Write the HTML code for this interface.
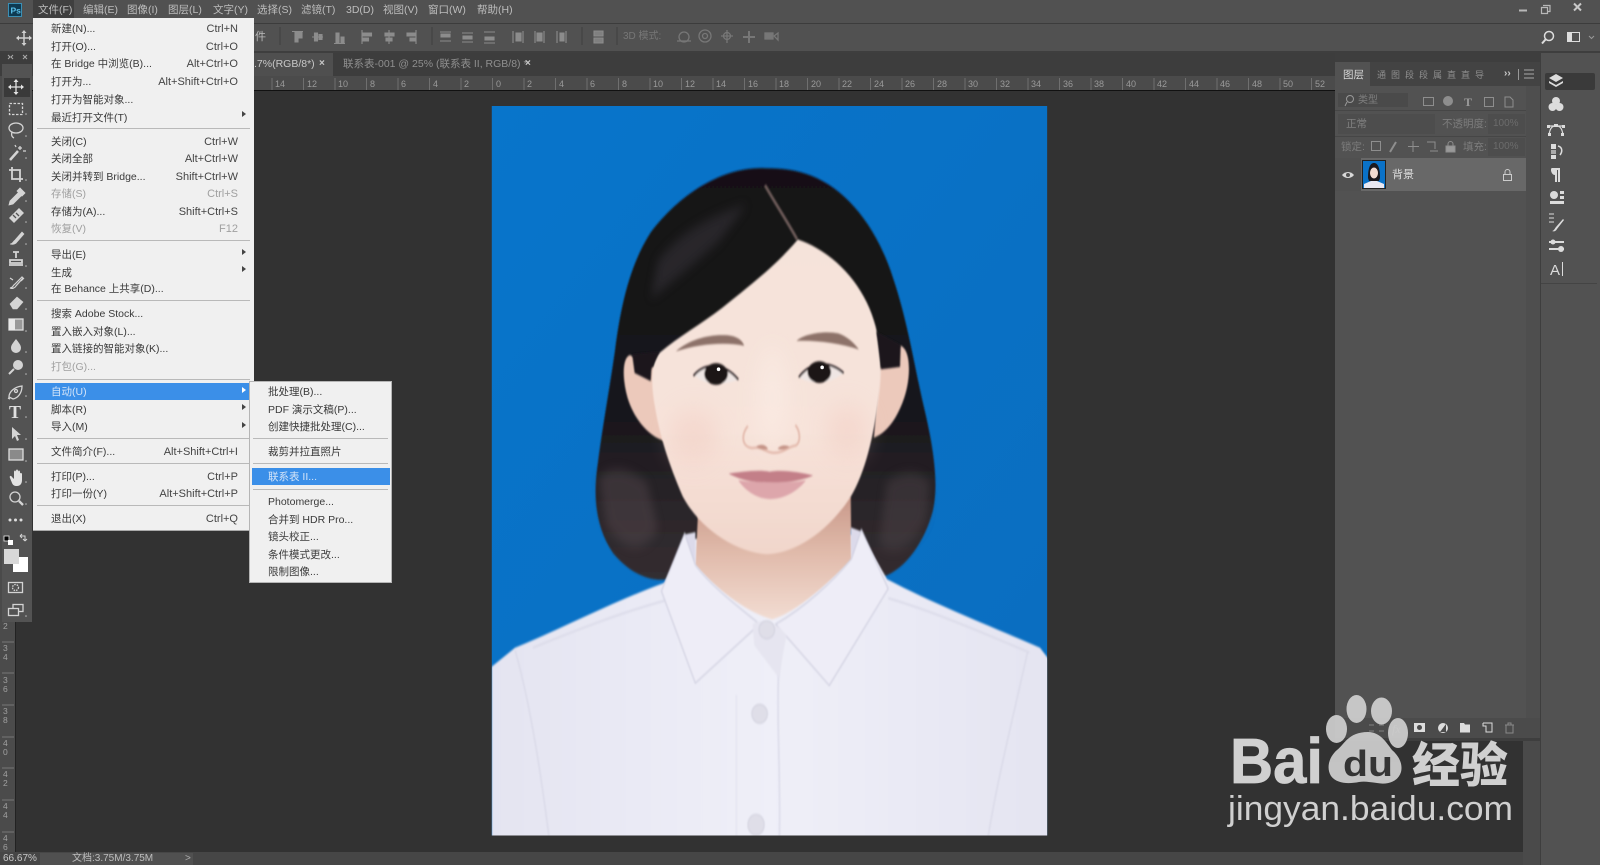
<!DOCTYPE html>
<html lang="zh"><head><meta charset="utf-8"><title>Photoshop</title>
<style>
html,body{margin:0;padding:0;background:#323232;width:1600px;height:865px;overflow:hidden}
#w{position:relative;width:1600px;height:865px;overflow:hidden;font:11px "Liberation Sans","Noto Sans CJK SC",sans-serif;filter:blur(.35px)}
.a{position:absolute}
.t{position:absolute;white-space:nowrap;line-height:14px}
.m{color:#bdbdbd;font-size:10.5px;top:3px}
.r{position:absolute;left:18px;white-space:nowrap;line-height:14px;color:#3a3a3a;font-size:10.5px}
.k{position:absolute;right:16px;white-space:nowrap;line-height:14px;color:#444;font-size:11px}
.d{color:#a0a0a0}
.s{position:absolute;left:4px;right:4px;height:1px;background:#b9b9b9}
.ar{position:absolute;left:209px;width:0;height:0;border-left:4px solid #444;border-top:3.5px solid transparent;border-bottom:3.5px solid transparent}
.u{position:absolute;left:18px;white-space:nowrap;line-height:14px;color:#3a3a3a;font-size:10.5px}
svg{position:absolute;overflow:visible}
</style></head><body><div id="w">

<!-- app chrome -->
<div class="a" style="left:0;top:0;width:1600px;height:23px;background:#515151"></div>
<div class="a" style="left:0;top:23px;width:1600px;height:1px;background:#3c3c3c"></div>
<div class="a" style="left:0;top:24px;width:1600px;height:27px;background:#515151"></div>
<div class="a" style="left:0;top:51px;width:1600px;height:2px;background:#3e3e3e"></div>
<div class="a" style="left:0;top:53px;width:1600px;height:812px;background:#4a4a4a"></div>

<!-- canvas -->
<div class="a" style="left:15px;top:90px;width:1508px;height:762px;background:#323232"></div>
<!-- doc tabs -->
<div class="a" style="left:0;top:53px;width:1335px;height:23px;background:#3d3d3d"></div>
<div class="a" style="left:33px;top:53px;width:300px;height:23px;background:#4f4f4f"></div>
<div class="t" style="left:254px;top:57px;color:#c8c8c8;font-size:10.5px">.7%(RGB/8*)</div>
<div class="t" style="left:319px;top:57px;color:#c8c8c8;font-size:10px;font-weight:bold">×</div>
<div class="t" style="left:343px;top:57px;color:#8f8f8f;font-size:10.5px">联系表-001 @ 25% (联系表 II, RGB/8) *</div>
<div class="t" style="left:525px;top:57px;color:#c8c8c8;font-size:10px;font-weight:bold">×</div>

<!-- horizontal ruler -->
<div class="a" style="left:0;top:76px;width:1335px;height:14px;background:#4b4b4b"></div>
<div class="a" style="left:15px;top:90px;width:1320px;height:1px;background:#111"></div>
<svg style="left:0;top:0" width="1600" height="865" font-family="Liberation Sans" font-size="9" fill="#9a9a9a">
<g stroke="#6f6f6f" stroke-width="1">
<path d="M272 78v12M303.500 78v12M335 78v12M366.500 78v12M398 78v12M429.500 78v12M461 78v12M492.500 78v12M524 78v12M555.500 78v12M587 78v12M618.500 78v12M650 78v12M681.500 78v12M713 78v12M744.500 78v12M776 78v12M807.500 78v12M839 78v12M870.500 78v12M902 78v12M933.500 78v12M965 78v12M996.500 78v12M1028 78v12M1059.500 78v12M1091 78v12M1122.500 78v12M1154 78v12M1185.500 78v12M1217 78v12M1248.500 78v12M1280 78v12M1311.500 78v12"/>
</g>
<text x="275" y="87">14</text><text x="307" y="87">12</text><text x="338" y="87">10</text><text x="370" y="87">8</text><text x="401" y="87">6</text><text x="433" y="87">4</text><text x="464" y="87">2</text><text x="496" y="87">0</text><text x="527" y="87">2</text><text x="559" y="87">4</text><text x="590" y="87">6</text><text x="622" y="87">8</text><text x="653" y="87">10</text><text x="685" y="87">12</text><text x="716" y="87">14</text><text x="748" y="87">16</text><text x="779" y="87">18</text><text x="811" y="87">20</text><text x="842" y="87">22</text><text x="874" y="87">24</text><text x="905" y="87">26</text><text x="937" y="87">28</text><text x="968" y="87">30</text><text x="1000" y="87">32</text><text x="1031" y="87">34</text><text x="1063" y="87">36</text><text x="1094" y="87">38</text><text x="1126" y="87">40</text><text x="1157" y="87">42</text><text x="1189" y="87">44</text><text x="1220" y="87">46</text><text x="1252" y="87">48</text><text x="1283" y="87">50</text><text x="1315" y="87">52</text>
</svg>

<!-- vertical ruler -->
<div class="a" style="left:0;top:622px;width:15px;height:231px;background:#4b4b4b"></div>
<div class="a" style="left:15px;top:622px;width:1px;height:231px;background:#222"></div>
<svg style="left:0;top:0" width="1600" height="865" font-family="Liberation Sans" font-size="8.500" fill="#a0a0a0">
<path stroke="#777" d="M2 642h12M2 673h12M2 705h12M2 737h12M2 768h12M2 800h12M2 832h12"/>
<text x="3" y="629">2</text>
<text x="3" y="651">3</text><text x="3" y="660">4</text>
<text x="3" y="683">3</text><text x="3" y="692">6</text>
<text x="3" y="714">3</text><text x="3" y="723">8</text>
<text x="3" y="746">4</text><text x="3" y="755">0</text>
<text x="3" y="777">4</text><text x="3" y="786">2</text>
<text x="3" y="809">4</text><text x="3" y="818">4</text>
<text x="3" y="841">4</text><text x="3" y="850">6</text>
</svg>

<!-- status bar -->
<div class="a" style="left:0;top:852px;width:1523px;height:13px;background:#464646"></div>
<div class="a" style="left:40px;top:853px;width:153px;height:12px;background:#505050"></div>
<div class="t" style="left:3px;top:852px;color:#c8c8c8;font-size:10px">66.67%</div>
<div class="t" style="left:72px;top:852px;color:#bdbdbd;font-size:10px">文档:3.75M/3.75M</div>
<div class="t" style="left:185px;top:852px;color:#aaa;font-size:10px">&gt;</div>

<!-- PHOTO -->
<svg style="left:490px;top:105px" width="560" height="740" viewBox="0 0 1568 1568" preserveAspectRatio="none">
<defs>
<clipPath id="pc"><rect x="5" y="2" width="1555" height="1546"/></clipPath>
<filter id="b1" x="-10%" y="-10%" width="120%" height="120%"><feGaussianBlur stdDeviation="2.500"/></filter>
<filter id="b2" x="-30%" y="-30%" width="160%" height="160%"><feGaussianBlur stdDeviation="12"/></filter>
<filter id="b3" x="-30%" y="-30%" width="160%" height="160%"><feGaussianBlur stdDeviation="30"/></filter>
<linearGradient id="bg" x1="0" y1="0" x2="1" y2="1"><stop offset="0" stop-color="#0875cb"/><stop offset="1" stop-color="#0a6dbf"/></linearGradient>
<linearGradient id="hair" x1="0" y1="0" x2="0" y2="1"><stop offset="0" stop-color="#131116"/><stop offset=".6" stop-color="#18161b"/><stop offset=".85" stop-color="#2c272b"/><stop offset="1" stop-color="#332d30"/></linearGradient>
<linearGradient id="skin" x1="0" y1="0" x2="0" y2="1"><stop offset="0" stop-color="#f5e3da"/><stop offset=".6" stop-color="#f7e3da"/><stop offset="1" stop-color="#f1d6cb"/></linearGradient>
<linearGradient id="neck" x1="0" y1="0" x2="0" y2="1"><stop offset="0" stop-color="#c9998a"/><stop offset=".45" stop-color="#e0baaa"/><stop offset="1" stop-color="#f2dcd2"/></linearGradient>
<linearGradient id="shirt" x1="0" y1="0" x2="1" y2="0"><stop offset="0" stop-color="#e4e4f1"/><stop offset=".5" stop-color="#efeff8"/><stop offset="1" stop-color="#e4e4f1"/></linearGradient>
</defs>
<g clip-path="url(#pc)">
<rect x="0" y="0" width="1568" height="1568" fill="url(#bg)"/>
<!-- hair -->
<path filter="url(#b1)" fill="url(#hair)" d="M770 134C650 130 530 190 450 270C390 340 365 430 350 520C335 600 315 680 300 770C288 840 300 900 345 950C395 995 450 1010 495 1005L620 900L1010 900L1100 1000C1160 985 1215 930 1240 860C1258 800 1240 720 1215 640C1190 560 1170 460 1130 370C1085 260 1000 180 900 150C860 138 820 134 770 134Z"/>
<!-- hair sheen -->
<g filter="url(#b2)" opacity=".45">
<path fill="#3f3a44" d="M470 330C540 260 640 230 720 210L640 290C580 330 520 370 450 410Z"/>
<path fill="#57494f" d="M305 790C340 760 390 770 440 800L470 900C420 960 370 940 325 890Z"/>
<path fill="#4f4449" d="M1110 800C1160 770 1205 775 1232 800L1222 880C1180 940 1130 960 1090 930Z"/>
</g>
<!-- part -->
<path filter="url(#b1)" fill="none" stroke="#6c5a58" stroke-width="7" d="M770 170C800 210 835 250 860 285"/>
<!-- shirt body -->
<path filter="url(#b1)" fill="url(#shirt)" d="M5 1190L70 1150C200 1110 350 1050 490 1012L545 920L1040 910L1112 1005C1250 1060 1420 1110 1540 1150L1565 1175V1560H5Z"/>
<g fill="none" stroke="#dadae8" stroke-width="4" filter="url(#b1)">
<path d="M70 1155C110 1260 140 1400 165 1550"/>
<path d="M1505 1160C1470 1280 1420 1430 1395 1550"/>
<path d="M120 1150C250 1110 370 1075 490 1050"/>
<path d="M1115 1045C1250 1075 1400 1125 1510 1160"/>
<path d="M810 1180C800 1280 815 1420 810 1560"/>
<path d="M690 1250V1560" stroke="#e4e4f0"/>
</g>
<!-- neck -->
<path filter="url(#b1)" fill="url(#neck)" d="M585 830L575 975C640 1030 720 1075 790 1090C860 1075 950 1010 1012 965L1010 830Z"/>
<!-- ears -->
<path filter="url(#b1)" fill="#ecc9bb" d="M392 530C370 535 370 580 385 620C405 670 450 705 490 712L470 560Z"/>
<path filter="url(#b1)" fill="#ecc9bb" d="M1150 510C1180 520 1178 580 1160 620C1140 665 1110 695 1075 705L1090 560Z"/>
<!-- face -->
<path filter="url(#b1)" fill="url(#skin)" d="M862 285C800 340 740 375 650 430C590 465 530 490 475 525C450 545 450 590 462 640C475 700 500 760 540 830C590 900 690 948 775 952C860 950 950 900 1010 830C1050 780 1075 700 1088 620C1097 570 1098 530 1080 470C1050 380 960 310 862 285Z"/>
<!-- hair over ear top -->
<path filter="url(#b1)" fill="#1a171c" d="M398 528L475 522L452 560L450 585L405 568Z"/>
<path filter="url(#b1)" fill="#1a171c" d="M1150 508L1082 480L1095 560L1148 555Z"/>
<g filter="url(#b3)" opacity=".35">
<ellipse cx="570" cy="700" rx="70" ry="50" fill="#f0c2b8"/>
<ellipse cx="1000" cy="690" rx="60" ry="50" fill="#f0c2b8"/>
<ellipse cx="790" cy="620" rx="45" ry="110" fill="#fff4ee"/>
</g>
<!-- brows -->
<path filter="url(#b1)" fill="#8d7269" d="M520 522C560 495 620 485 665 488C690 490 705 497 712 510C660 502 590 505 520 522Z"/>
<path filter="url(#b1)" fill="#8d7269" d="M858 500C880 484 940 478 975 484C1000 490 1020 505 1033 518C980 505 910 498 858 500Z"/>
<!-- eyes -->
<g filter="url(#b1)">
<path fill="#efe6e4" d="M572 572C600 546 655 545 695 582C650 596 600 594 572 572Z"/>
<path fill="#efe6e4" d="M865 577C890 545 950 540 990 568C950 592 900 594 865 577Z"/>
<path fill="none" stroke="#2a1f20" stroke-width="5" d="M570 574C600 545 655 545 695 582"/>
<path fill="none" stroke="#2a1f20" stroke-width="5" d="M865 577C895 545 950 540 990 568"/>
<ellipse cx="633" cy="570" rx="33" ry="23" fill="#1c1213"/>
<ellipse cx="922" cy="566" rx="33" ry="23" fill="#1c1213"/>
</g>
<ellipse cx="640" cy="560" rx="5" ry="4" fill="#fff"/><ellipse cx="930" cy="556" rx="5" ry="4" fill="#fff"/>
<!-- nose -->
<g filter="url(#b1)">
<path fill="none" stroke="#e3b9ac" stroke-width="5" d="M722 680C702 700 705 725 735 727C760 722 775 738 795 737C820 738 840 722 855 722C872 715 868 690 855 678"/>
<path fill="#c39285" d="M745 724c12-6 26-5 34 5c-12 2-24 0-34-5zM805 728c10-8 24-8 34-4c-10 6-24 8-34 4z"/>
</g>
<!-- lips -->
<g filter="url(#b1)">
<path fill="#c37f88" d="M668 781C700 778 750 772 783 777C815 772 870 778 905 785C860 800 810 800 783 800C750 800 710 798 668 781Z"/>
<path fill="#dda6ab" d="M695 795C740 800 830 802 885 795C860 820 820 835 785 835C750 835 715 818 695 795Z"/>
</g>
<!-- collar -->
<g filter="url(#b1)">
<path fill="#dcdaea" d="M545 910L575 905L575 975L545 960Z M1010 895L1045 905L1050 945L1012 965Z"/>
<path fill="#eeedf7" stroke="#cfcfdf" stroke-width="3" d="M545 908L480 1030L575 1225L755 1100C690 1060 620 1020 575 975Z"/>
<path fill="#eeedf7" stroke="#cfcfdf" stroke-width="3" d="M1040 900L1115 1025L950 1230L800 1100C880 1065 960 1010 1012 962Z"/>
<path fill="#e6e5f0" d="M735 1100C755 1090 800 1090 830 1125L820 1165L810 1215L740 1145Z"/>
</g>
<g filter="url(#b1)" fill="#dfdee8" stroke="#cdcdda" stroke-width="2">
<ellipse cx="775" cy="1112" rx="22" ry="19"/>
<ellipse cx="755" cy="1290" rx="22" ry="20"/>
<ellipse cx="745" cy="1525" rx="23" ry="22"/>
</g>
</g>
</svg>

<!-- menubar -->
<svg style="left:8px;top:3px" width="14" height="14"><rect x=".5" y=".5" width="13" height="13" fill="#0e3a52" stroke="#3b8fb5"/><text x="2.500" y="10.500" font-family="Liberation Sans" font-size="8.500" font-weight="bold" fill="#5cc3ee">Ps</text></svg>
<div class="a" style="left:33px;top:0;width:41px;height:19px;background:#3f3f3f"></div>
<div class="t m" style="left:38px">文件(F)</div><div class="t m" style="left:83px">编辑(E)</div><div class="t m" style="left:127px">图像(I)</div><div class="t m" style="left:168px">图层(L)</div><div class="t m" style="left:213px">文字(Y)</div><div class="t m" style="left:257px">选择(S)</div><div class="t m" style="left:301px">滤镜(T)</div><div class="t m" style="left:346px">3D(D)</div><div class="t m" style="left:383px">视图(V)</div><div class="t m" style="left:428px">窗口(W)</div><div class="t m" style="left:477px">帮助(H)</div>

<!-- window controls & top icons -->
<svg style="left:0;top:0" width="1600" height="100" fill="none" stroke="#c8c8c8">
<path d="M1519 10.500h8" stroke-width="2" stroke="#b8b8b8"/>
<path d="M1543 5.500h7v6h-2M1541.500 7.500h6v6h-6z" stroke-width="1.200" stroke="#b8b8b8"/>
<path d="M1574 3.500l7 7M1581 3.500l-7 7" stroke-width="2"/>
<circle cx="1549" cy="36" r="4.500" stroke-width="1.500" stroke="#ddd"/><path d="M1545.500 39.500l-3.500 4" stroke-width="2" stroke="#ddd"/>
<rect x="1567.500" y="32.500" width="12" height="9" stroke="#ddd"/><path d="M1568 33h4v8h-4z" fill="#ddd" stroke="none"/>
<path d="M1589 36l2.500 2.500l2.500-2.500" stroke="#999"/>
<!-- options move icon -->
<g stroke="#d0d0d0" stroke-width="1.500"><path d="M24 32v12M18 38h12"/></g>
<path d="M24 30l-2.500 3h5zM24 46l-2.500-3h5zM16 38l3-2.500v5zM32 38l-3-2.500v5z" fill="#d0d0d0" stroke="none"/>
<path d="M280 27v18M432 27v18M582 27v18M617 27v18" stroke="#3f3f3f"/>
<!-- align icons -->
<g stroke="#8c8c8c" stroke-width="1.100">
<path d="M292 31.500h11M295 32v10h3V32M299 32v6h3v-6" fill="#8c8c8c"/>
<path d="M312 37h11M314.500 33h3v8h-3zM319 34.500h3v5h-3z" fill="#8c8c8c"/>
<path d="M334 43.500h11M336 33h3v10h-3zM341 37h3v6h-3z" fill="#8c8c8c"/>
<path d="M362 30v14M362.500 33h9v3h-9zM362.500 38h6v3h-6z" fill="#8c8c8c"/>
<path d="M389 30v14M385 33h9v3h-9zM386 38h6v3h-6z" fill="#8c8c8c"/>
<path d="M416 30v14M407 33h9v3h-9zM410 38h6v3h-6z" fill="#8c8c8c"/>
<path d="M440 32h11M441 34h9v3h-9zM440 41h11" fill="#8c8c8c"/>
<path d="M462 33h11M463 36h9v3h-9zM462 42h11" fill="#8c8c8c"/>
<path d="M484 32h11M485 37h9v3h-9zM484 43h11" fill="#8c8c8c"/>
<path d="M513 31v12M516 33h5v8h-5zM523 31v12" fill="#8c8c8c"/>
<path d="M535 31v12M537 33h5v8h-5zM544 31v12" fill="#8c8c8c"/>
<path d="M557 31v12M560 33h4v8h-4zM566 31v12" fill="#8c8c8c"/>
<path d="M594 31h9v5h-9zM594 38h9v5h-9z" fill="#808080"/>
</g>
<g stroke="#777" stroke-width="1.300">
<circle cx="684" cy="37" r="5"/><path d="M677 41h14"/>
<circle cx="705" cy="36" r="6"/><circle cx="705" cy="36" r="2.500"/>
<path d="M727 30v13M721 36h12"/><circle cx="727" cy="36" r="3.500"/>
<path d="M749 31v12M743 37h12" stroke-width="2"/>
<rect x="765" y="33" width="8" height="6" fill="#777"/><path d="M774 36l4-3v7z"/>
</g>
<!-- collapse -->
<path d="M8 55l2 2l-2 2M13 55l-2 2l2 2" stroke="#aaa"/><path d="M23 55l4 4M27 55l-4 4" stroke="#aaa"/>
<path d="M1592 55l-2 2l2 2M1596 55l-2 2l2 2" stroke="#bbb"/>
</svg>
<div class="t" style="left:255px;top:30px;color:#bcbcbc;font-size:11px">件</div>
<div class="t" style="left:623px;top:30px;color:#777;font-size:10px">3D 模式:</div>

<!-- toolbox -->
<div class="a" style="left:2px;top:64px;width:30px;height:558px;background:#535353"></div>
<div class="a" style="left:4px;top:78px;width:26px;height:19px;background:#3a3a3a"></div>
<svg style="left:0;top:0" width="40" height="640" fill="none" stroke="#d4d4d4" stroke-width="1.300">
<g stroke="#e2e2e2"><path d="M16 81v12M10 87h12"/><path d="M16 79l-2.500 3h5zM16 95l-2.500-3h5zM8 87l3-2.500v5zM24 87l-3-2.500v5z" fill="#e2e2e2" stroke="none"/></g>
<rect x="9.500" y="103.500" width="13" height="11" stroke-dasharray="2.500 1.500"/>
<ellipse cx="16" cy="128" rx="7" ry="5"/><path d="M12 132c-1 3 0 5 2 6"/>
<path d="M10 160l8-9" stroke-width="2.500"/><path d="M20 146v4M18 148h4M23 151h3M15 145l1 2"/>
<path d="M12 167v12h11M9 170h11v12" stroke-width="1.800"/>
<path d="M10 201l8-8 3 3-8 8-4 1zM17 191l3-3 5 5-3 3z" fill="#d4d4d4" stroke-width=".8"/>
<path d="M9 219l10-10 5 5-10 10z" fill="#d4d4d4" stroke="none" transform="translate(0,-1)"/><path d="M13 215l3 3M16 213l3 3" stroke="#535353"/>
<path d="M10 244c3 0 3-3 5-4l7-8 2 2-7 8c-1 2-4 3-7 2z" fill="#d4d4d4" stroke-width=".6"/>
<path d="M16 252v6M13 252h6M10 263h12v-3h-12zM9 265h14" stroke-width="1.800"/>
<path d="M10 288c3 0 3-3 5-4l7-7 1 1-7 8c-1 2-4 3-6 2zM10 278l3 2M24 278l-3 3" stroke-width="1.200"/>
<path d="M10 304l7-7 6 5-6 7h-4z" fill="#d4d4d4" stroke-width=".6"/>
<rect x="9" y="319" width="14" height="11" fill="#999" stroke="#ddd"/><rect x="9" y="319" width="6" height="11" fill="#e8e8e8" stroke="none"/>
<path d="M16 339c3 4 5 6 5 9a5 5 0 0 1-10 0c0-3 2-5 5-9z" fill="#d4d4d4" stroke="none"/>
<circle cx="18" cy="365" r="5" fill="#d4d4d4" stroke="none"/><path d="M14 369l-5 5" stroke-width="2"/>
<path d="M9 397c0-5 5-10 13-11 0 7-4 12-9 13z"/><circle cx="16" cy="391" r="1.500"/><path d="M8 398l2 1"/>
<text x="9" y="418" font-family="Liberation Serif" font-size="18" font-weight="bold" fill="#e0e0e0" stroke="none">T</text>
<path d="M12 427v12l3-3 2 5 2-1-2-5h4z" fill="#d4d4d4" stroke="none"/>
<rect x="9" y="449" width="14" height="11" fill="#8a8a8a" stroke="#ddd"/>
<path d="M10 478c-1-2 1-3 2-1l2 2v-7c0-2 2-2 2 0v-1c0-2 2-2 2 0v1c0-2 2-2 2 0v2c0-2 2-1 2 0v6c0 4-2 6-5 6s-4-1-5-3z" fill="#e2e2e2" stroke="none"/>
<circle cx="15" cy="497" r="5"/><path d="M19 501l4 4" stroke-width="2.300"/>
<circle cx="10" cy="520" r="1.500" fill="#ddd" stroke="none"/><circle cx="15.500" cy="520" r="1.500" fill="#ddd" stroke="none"/><circle cx="21" cy="520" r="1.500" fill="#ddd" stroke="none"/>
<rect x="4" y="536" width="5" height="5" fill="#000" stroke="#eee" stroke-width=".8"/><rect x="8" y="540" width="5" height="5" fill="#fff" stroke="none"/>
<path d="M20 536h5v5M20 536l2-2M20 536l2 2M25 541l-2-2M25 541l2-2" stroke-width="1"/>
<rect x="13" y="557" width="15" height="15" fill="#fff" stroke="none"/>
<rect x="4" y="549" width="15" height="15" fill="#d8d8d8" stroke="none"/>
<rect x="8.500" y="582.500" width="14" height="10"/><circle cx="15.500" cy="587.500" r="3" stroke-dasharray="1.500 1"/>
<rect x="13" y="604.500" width="10" height="7"/><rect x="8.500" y="608.500" width="10" height="7" fill="#535353"/>
<g fill="#bbb" stroke="none"><circle cx="26" cy="114" r=".8"/><circle cx="26" cy="136" r=".8"/><circle cx="26" cy="158" r=".8"/><circle cx="26" cy="180" r=".8"/><circle cx="26" cy="201" r=".8"/><circle cx="26" cy="222" r=".8"/><circle cx="26" cy="244" r=".8"/><circle cx="26" cy="266" r=".8"/><circle cx="26" cy="288" r=".8"/><circle cx="26" cy="309" r=".8"/><circle cx="26" cy="331" r=".8"/><circle cx="26" cy="352" r=".8"/><circle cx="26" cy="374" r=".8"/><circle cx="26" cy="396" r=".8"/><circle cx="26" cy="417" r=".8"/><circle cx="26" cy="439" r=".8"/><circle cx="26" cy="461" r=".8"/><circle cx="26" cy="482" r=".8"/><circle cx="26" cy="504" r=".8"/><circle cx="26" cy="616" r=".8"/></g>
</svg>

<!-- file menu -->
<div class="a" style="left:33px;top:18px;width:221px;height:512px;background:#f0f0f0;box-shadow:0 1px 0 #aaa;">
<div class="r" style="top:4px">新建(N)...</div><div class="k" style="top:4px">Ctrl+N</div>
<div class="r" style="top:22px">打开(O)...</div><div class="k" style="top:22px">Ctrl+O</div>
<div class="r" style="top:39px">在 Bridge 中浏览(B)...</div><div class="k" style="top:39px">Alt+Ctrl+O</div>
<div class="r" style="top:57px">打开为...</div><div class="k" style="top:57px">Alt+Shift+Ctrl+O</div>
<div class="r" style="top:75px">打开为智能对象...</div>
<div class="r" style="top:93px">最近打开文件(T)</div><div class="ar" style="top:93px"></div>
<div class="s" style="top:110px"></div>
<div class="r" style="top:117px">关闭(C)</div><div class="k" style="top:117px">Ctrl+W</div>
<div class="r" style="top:134px">关闭全部</div><div class="k" style="top:134px">Alt+Ctrl+W</div>
<div class="r" style="top:152px">关闭并转到 Bridge...</div><div class="k" style="top:152px">Shift+Ctrl+W</div>
<div class="r d" style="top:169px">存储(S)</div><div class="k d" style="top:169px">Ctrl+S</div>
<div class="r" style="top:187px">存储为(A)...</div><div class="k" style="top:187px">Shift+Ctrl+S</div>
<div class="r d" style="top:204px">恢复(V)</div><div class="k d" style="top:204px">F12</div>
<div class="s" style="top:222px"></div>
<div class="r" style="top:230px">导出(E)</div><div class="ar" style="top:231px"></div>
<div class="r" style="top:248px">生成</div><div class="ar" style="top:248px"></div>
<div class="r" style="top:264px">在 Behance 上共享(D)...</div>
<div class="s" style="top:282px"></div>
<div class="r" style="top:289px">搜索 Adobe Stock...</div>
<div class="r" style="top:307px">置入嵌入对象(L)...</div>
<div class="r" style="top:324px">置入链接的智能对象(K)...</div>
<div class="r d" style="top:342px">打包(G)...</div>
<div class="s" style="top:361px"></div>
<div class="a" style="left:2px;top:365px;width:217px;height:17px;background:#3b8fe8"></div>
<div class="r" style="top:367px;color:#d4e4f8">自动(U)</div><div class="ar" style="top:369px;border-left-color:#fff"></div>
<div class="r" style="top:385px">脚本(R)</div><div class="ar" style="top:386px"></div>
<div class="r" style="top:402px">导入(M)</div><div class="ar" style="top:404px"></div>
<div class="s" style="top:420px"></div>
<div class="r" style="top:427px">文件简介(F)...</div><div class="k" style="top:427px">Alt+Shift+Ctrl+I</div>
<div class="s" style="top:445px"></div>
<div class="r" style="top:452px">打印(P)...</div><div class="k" style="top:452px">Ctrl+P</div>
<div class="r" style="top:469px">打印一份(Y)</div><div class="k" style="top:469px">Alt+Shift+Ctrl+P</div>
<div class="s" style="top:487px"></div>
<div class="r" style="top:494px">退出(X)</div><div class="k" style="top:494px">Ctrl+Q</div>
</div>

<!-- sub menu -->
<div class="a" style="left:249px;top:381px;width:143px;height:202px;background:#f0f0f0;border:1px solid #b5b5b5;box-sizing:border-box">
<div class="u" style="top:3px">批处理(B)...</div>
<div class="u" style="top:21px">PDF 演示文稿(P)...</div>
<div class="u" style="top:38px">创建快捷批处理(C)...</div>
<div class="s" style="top:56px;left:3px;right:3px"></div>
<div class="u" style="top:63px">裁剪并拉直照片</div>
<div class="s" style="top:81px;left:3px;right:3px"></div>
<div class="a" style="left:2px;top:86px;width:138px;height:17px;background:#3b8fe8"></div>
<div class="u" style="top:88px;color:#d4e4f8">联系表 II...</div>
<div class="s" style="top:107px;left:3px;right:3px"></div>
<div class="u" style="top:113px">Photomerge...</div>
<div class="u" style="top:131px">合并到 HDR Pro...</div>
<div class="u" style="top:148px">镜头校正...</div>
<div class="u" style="top:166px">条件模式更改...</div>
<div class="u" style="top:183px">限制图像...</div>
</div>

<!-- layers panel -->
<div class="a" style="left:1335px;top:53px;width:205px;height:9px;background:#3e3e3e"></div>
<div class="a" style="left:1335px;top:62px;width:205px;height:676px;background:#525252"></div>
<div class="a" style="left:1335px;top:62px;width:205px;height:24px;background:#434343"></div>
<div class="a" style="left:1335px;top:62px;width:35px;height:24px;background:#525252"></div>
<div class="t" style="left:1343px;top:68px;color:#d8d8d8;font-size:10.5px">图层</div>
<div class="t" style="left:1377px;top:68px;color:#8e8e8e;font-size:9px;letter-spacing:5px">通图段段属直直导</div>
<div class="t" style="left:1504px;top:67px;color:#ccc;font-size:10px;font-weight:bold">››</div>
<div class="a" style="left:1518px;top:69px;width:1px;height:11px;background:#999"></div>
<svg style="left:0;top:0" width="1600" height="800" fill="none" stroke="#a8a8a8">
<path d="M1524 70h10M1524 74h10M1524 78h10"/>
<!-- filter row -->
<g stroke="#8e8e8e"><rect x="1423.500" y="97.500" width="10" height="8"/><circle cx="1448" cy="101" r="4.500" fill="#8e8e8e"/><rect x="1484.500" y="97.500" width="9" height="9"/><path d="M1505 97h5l3 3v7h-8z"/></g>
<text x="1464" y="106" font-family="Liberation Serif" font-size="12" font-weight="bold" fill="#9a9a9a" stroke="none">T</text>
<circle cx="1531" cy="97" r="3.500" fill="#8a8a8a" stroke="none"/>
<!-- lock row -->
<g stroke="#8e8e8e"><rect x="1371.500" y="141.500" width="9" height="9"/><path d="M1390 152l6-10" stroke-width="2"/><path d="M1413 141v11M1408 146.500h11"/><path d="M1427 142h8v7M1430 151h8"/><rect x="1446" y="146" width="9" height="6" fill="#999"/><path d="M1448 146v-2a2.500 2.500 0 0 1 5 0v2"/></g>
</svg>
<div class="a" style="left:1338px;top:93px;width:70px;height:14px;background:#4a4a4a"></div>
<svg style="left:0;top:0" width="1600" height="200" fill="none"><circle cx="1350" cy="99" r="3.500" stroke="#999"/><path d="M1347 102l-2 4" stroke="#999"/></svg>
<div class="t" style="left:1358px;top:94px;color:#7f7f7f;font-size:10px">类型</div>
<div class="a" style="left:1335px;top:110px;width:205px;height:1px;background:#464646"></div>
<div class="a" style="left:1338px;top:114px;width:97px;height:20px;background:#4d4d4d"></div>
<div class="t" style="left:1346px;top:117px;color:#808080;font-size:10.5px">正常</div>
<div class="t" style="left:1442px;top:117px;color:#7d7d7d;font-size:10.5px">不透明度:</div>
<div class="a" style="left:1488px;top:114px;width:37px;height:20px;background:#4d4d4d"></div>
<div class="t" style="left:1493px;top:117px;color:#6c6c6c;font-size:10px">100%</div>
<div class="a" style="left:1335px;top:136px;width:205px;height:1px;background:#464646"></div>
<div class="t" style="left:1341px;top:140px;color:#7d7d7d;font-size:10.5px">锁定:</div>
<div class="t" style="left:1463px;top:140px;color:#7d7d7d;font-size:10.5px">填充:</div>
<div class="a" style="left:1488px;top:138px;width:37px;height:18px;background:#4d4d4d"></div>
<div class="t" style="left:1493px;top:140px;color:#6c6c6c;font-size:10px">100%</div>
<div class="a" style="left:1335px;top:158px;width:191px;height:33px;background:#505050"></div>
<div class="a" style="left:1361px;top:158px;width:165px;height:33px;background:#686868"></div>
<svg style="left:1362px;top:160px" width="24" height="29" viewBox="0 0 24 29"><rect x=".5" y=".5" width="23" height="28" fill="#0a72c8" stroke="#222"/><path d="M6 18c0-12 3-15 6-15s6 3 6 15l-1 3h-10z" fill="#1b191e"/><ellipse cx="12" cy="13" rx="4" ry="5.500" fill="#f3dcd2"/><path d="M2 28v-4l7-3h6l7 3v4z" fill="#e9e9f3"/></svg>
<svg style="left:0;top:0" width="1600" height="800" fill="none" stroke="#d8d8d8">
<path d="M1342 175c3-4 9-4 12 0c-3 4-9 4-12 0z" fill="#d8d8d8" stroke="none"/><circle cx="1348" cy="175" r="2" fill="#525252" stroke="none"/>
<rect x="1503.500" y="174.500" width="8" height="6" stroke="#ccc"/><path d="M1505 174v-2a2.500 2.500 0 0 1 5 0v2" stroke="#ccc"/>
</svg>
<div class="t" style="left:1392px;top:168px;color:#ddd;font-size:11px">背景</div>
<div class="a" style="left:1526px;top:86px;width:14px;height:632px;background:#4e4e4e"></div>
<div class="a" style="left:1335px;top:718px;width:205px;height:20px;background:#4b4b4b"></div>
<div class="a" style="left:1335px;top:738px;width:205px;height:3px;background:#3e3e3e"></div>
<div class="a" style="left:1523px;top:741px;width:17px;height:124px;background:#4a4a4a"></div>
<svg style="left:0;top:0" width="1600" height="865" fill="none" stroke="#888">
<path d="M1369 725h5M1379 725h5M1369 731h5M1379 731h5" stroke="#808080"/>
<text x="1392" y="733" font-family="Liberation Serif" font-style="italic" font-size="12" fill="#8a8a8a" stroke="none">fx</text>
<rect x="1414" y="723" width="11" height="9" fill="#ddd" stroke="none"/><circle cx="1419.500" cy="727.500" r="2.500" fill="#4b4b4b" stroke="none"/>
<circle cx="1443" cy="728" r="5" fill="#ddd" stroke="none"/><path d="M1440 732l6-8v8z" fill="#4b4b4b" stroke="none"/>
<path d="M1460 723h4l1 1.500h5v8h-10z" fill="#ddd" stroke="none"/>
<path d="M1483 723h9v8M1483 723v3h3v6h6v-2" stroke="#ddd"/>
<path d="M1505 725h9M1506 725v8h7v-8M1508 725v-2h3v2" stroke="#888"/>
</svg>

<!-- dock -->
<div class="a" style="left:1540px;top:53px;width:1px;height:812px;background:#3e3e3e"></div>
<div class="a" style="left:1541px;top:53px;width:59px;height:812px;background:#525252"></div>
<div class="a" style="left:1545px;top:73px;width:50px;height:17px;background:#3a3a3a;border-radius:2px"></div>
<div class="a" style="left:1541px;top:283px;width:56px;height:1px;background:#444"></div>
<svg style="left:0;top:0" width="1600" height="300" fill="#dcdcdc" stroke="none">
<path d="M1556 74l7 4-7 4-7-4zM1549 81l7 4 7-4v2l-7 4-7-4z"/>
<circle cx="1556" cy="101" r="4"/><circle cx="1552.500" cy="107" r="4"/><circle cx="1559.500" cy="107" r="4"/>
<path d="M1549 135c1-7 3-9 7-9s6 2 7 9M1548 126h16" fill="none" stroke="#dcdcdc" stroke-width="1.200"/><rect x="1547" y="125" width="3" height="3"/><rect x="1562" y="125" width="3" height="3"/><rect x="1554" y="124" width="4" height="3"/><rect x="1548" y="133" width="3" height="3"/><rect x="1561" y="133" width="3" height="3"/>
<rect x="1551" y="144" width="5" height="5"/><rect x="1551" y="150" width="5" height="4" fill="#aaa"/><rect x="1551" y="155" width="5" height="4"/><path d="M1558 146c4 1 5 5 2 9" fill="none" stroke="#dcdcdc" stroke-width="1.500"/>
<path d="M1552 168h8v14h-2v-12h-1v12h-2v-7c-4 0-5-7-3-7z"/>
<circle cx="1554" cy="195" r="4"/><rect x="1560" y="191" width="4" height="3"/><rect x="1560" y="196" width="4" height="3"/><rect x="1550" y="201" width="14" height="3"/>
<path d="M1549 214h5M1549 218h5M1549 222h5" stroke="#dcdcdc" fill="none"/><path d="M1552 231c2 0 3-3 4-4l7-8 1 1-7 9c-1 2-3 3-5 2z"/>
<rect x="1549" y="241" width="15" height="2"/><circle cx="1553" cy="242" r="2.500"/><rect x="1549" y="248" width="15" height="2"/><circle cx="1561" cy="249" r="3"/>
<text x="1550" y="275" font-family="Liberation Sans" font-size="15">A</text><rect x="1562" y="262" width="1" height="14"/>
</svg>

<!-- watermark -->
<svg style="left:1200px;top:680px" width="400" height="185" viewBox="0 0 400 185" fill="#d0d0d0">
<g opacity=".92">
<ellipse cx="156.500" cy="29" rx="10" ry="14"/>
<ellipse cx="181.500" cy="31" rx="10.500" ry="13.500"/>
<ellipse cx="136.500" cy="49" rx="10.500" ry="14"/>
<ellipse cx="198" cy="53" rx="10" ry="15"/>
<path d="M168 52c12 0 18 10 24 18c7 6 11 14 9 22c-3 10-14 13-24 11c-7-1-13-2-18-1c-10 2-22 2-28-6c-5-8-2-19 6-26c7-5 11-18 31-18z"/>
</g>
<text x="30" y="103" font-family="Liberation Sans" font-size="64" font-weight="bold" stroke="#d0d0d0" stroke-width=".8" textLength="93" lengthAdjust="spacingAndGlyphs">Bai</text>
<text x="143" y="96" font-family="Liberation Sans" font-size="36" font-weight="bold" fill="#343434" textLength="50" lengthAdjust="spacingAndGlyphs">du</text>
<text x="212" y="102" font-family="Noto Sans CJK SC" font-size="48" font-weight="900" textLength="96" lengthAdjust="spacingAndGlyphs">经验</text>
<text x="28" y="140" font-family="Liberation Sans" font-size="34" textLength="285" lengthAdjust="spacingAndGlyphs">jingyan.baidu.com</text>
</svg>

</div></body></html>
